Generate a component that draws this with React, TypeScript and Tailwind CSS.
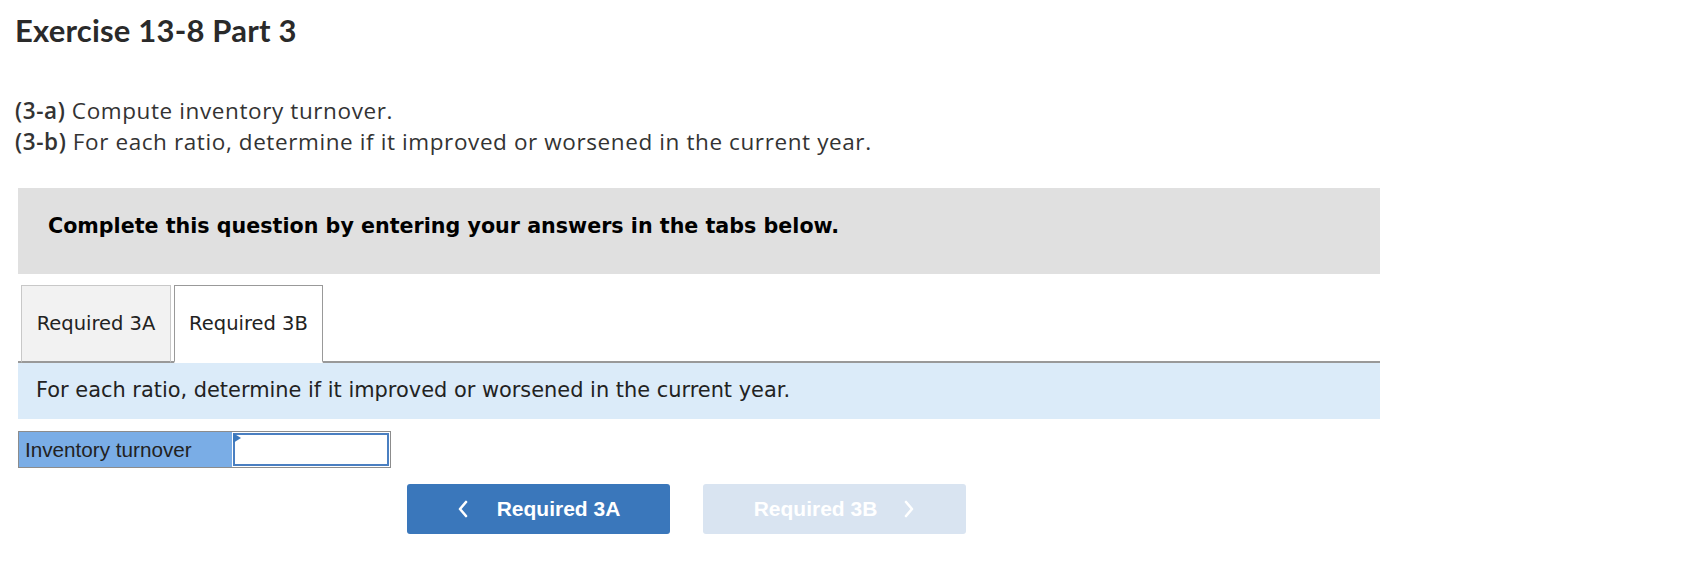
import React from "react";

function ChevronLeft() {
  return (
    <svg width="12" height="18" viewBox="0 0 12 18" fill="none">
      <path d="M9 2L3 9l6 7" stroke="currentColor" strokeWidth="2.6" strokeLinecap="round" strokeLinejoin="round" />
    </svg>
  );
}

function ChevronRight() {
  return (
    <svg width="12" height="18" viewBox="0 0 12 18" fill="none">
      <path d="M3 2l6 7-6 7" stroke="currentColor" strokeWidth="2.6" strokeLinecap="round" strokeLinejoin="round" />
    </svg>
  );
}

export default function App() {
  return (
    <div className="min-h-[574px] w-[1700px] bg-white pl-[18px] pt-[11px] text-[#222]">
      <h1 className="-ml-[3px] font-['Lato',sans-serif] text-[31px] font-bold leading-[38px] tracking-[0.2px] text-[#2a2a2a]">
        Exercise 13-8 Part 3
      </h1>

      <div className="-ml-[3px] mt-[46px] font-['Open_Sans',sans-serif] text-[22.5px] leading-[31px] tracking-[0.6px] text-[#333]">
        <p>
          <span className="font-semibold">(3-a)</span> Compute inventory turnover.
        </p>
        <p>
          <span className="font-semibold">(3-b)</span> For each ratio, determine if it improved or worsened in the current year.
        </p>
      </div>

      <div className="mt-[31px] w-[1362px]">
        <div className="h-[86px] bg-[#e0e0e0] pl-[30px] pt-[24px]">
          <p className="font-['DejaVu_Sans',sans-serif] text-[20.65px] font-bold leading-[28px] text-black">
            Complete this question by entering your answers in the tabs below.
          </p>
        </div>

        <div className="mt-[11px] flex items-end gap-[3px] border-b-2 border-[#999] pl-[3px]">
          <button className="-mb-[2px] flex h-[78px] w-[150px] items-center justify-center border border-b-2 border-[#c8c8c8] border-b-[#999] bg-[#f2f2f2] font-['DejaVu_Sans',sans-serif] text-[19.5px] text-[#222]">
            Required 3A
          </button>
          <button className="-mb-[2px] flex h-[78px] w-[149px] items-center justify-center border border-b-2 border-[#999] border-b-white bg-white font-['DejaVu_Sans',sans-serif] text-[19.5px] text-[#222]">
            Required 3B
          </button>
        </div>

        <div className="flex h-[56px] items-center bg-[#dbebf9] pl-[18px]">
          <p className="font-['DejaVu_Sans',sans-serif] text-[20.9px] text-[#222]">
            For each ratio, determine if it improved or worsened in the current year.
          </p>
        </div>

        <div className="mt-[12px] flex h-[37px] w-[373px] border border-[#8c8c8c]">
          <div className="flex w-[213px] items-center bg-[#7aade6] pl-[6px] font-['Liberation_Sans',sans-serif] text-[20.7px] text-[#222]">
            Inventory turnover
          </div>
          <div className="relative m-[1px] flex-1 border-2 border-[#4a7fc1] bg-white">
            <span className="absolute -left-[2px] -top-[2px] h-0 w-0 border-y-[5px] border-l-[8px] border-y-transparent border-l-[#3b78bd]" />
          </div>
        </div>

        <div className="mt-[16px] flex gap-[33px] pl-[389px]">
          <button className="flex h-[50px] w-[263px] items-center justify-center gap-[28px] rounded-[3px] bg-[#3a77bb] font-['Liberation_Sans',sans-serif] text-[21px] font-bold text-white">
            <ChevronLeft />
            <span>Required 3A</span>
          </button>
          <button className="flex h-[50px] w-[263px] items-center justify-center gap-[26px] rounded-[3px] bg-[#d9e4f1] font-['Liberation_Sans',sans-serif] text-[21px] font-bold text-white">
            <span>Required 3B</span>
            <ChevronRight />
          </button>
        </div>
      </div>
    </div>
  );
}
